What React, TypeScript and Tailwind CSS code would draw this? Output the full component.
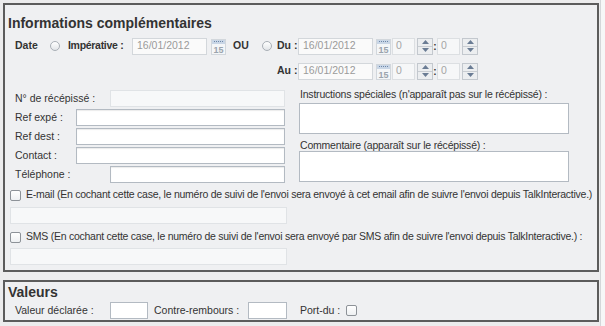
import React from "react"

const font = "font-['Liberation_Sans',Arial,sans-serif]"

function Radio() {
    return (
        <span className="size-[10px] shrink-0 rounded-full border border-[#a9afb6] bg-gradient-to-b from-[#ffffff] to-[#e2e5e8]" />
    )
}

function CheckBox() {
    return <span className="size-[11px] shrink-0 rounded-[2px] border border-[#8d9298] bg-gradient-to-b from-[#ffffff] to-[#eef0f2]" />
}

function CalendarIcon() {
    return (
        <svg width="15" height="17" viewBox="0 0 15 17" className="shrink-0">
            <rect x="0.5" y="1.5" width="14" height="15" fill="#f4f6f8" stroke="#d2d7dc" />
            <rect x="1" y="2" width="13" height="4" fill="#c9d6e6" />
            <rect x="3" y="3" width="1" height="1" fill="#6d87a8" />
            <rect x="5" y="3" width="1" height="1" fill="#6d87a8" />
            <rect x="7" y="3" width="1" height="1" fill="#6d87a8" />
            <rect x="9" y="3" width="1" height="1" fill="#6d87a8" />
            <rect x="11" y="3" width="1" height="1" fill="#6d87a8" />
            <text x="7.5" y="14.5" textAnchor="middle" fontSize="9" fontFamily="Liberation Sans, Arial" fill="#9aa3ad">15</text>
        </svg>
    )
}

function Spinner() {
    return (
        <div className="ml-[2px] flex h-[17px] w-[16px] shrink-0 flex-col border border-[#c3c8ce] bg-[#eceef0]">
            <div className="flex flex-1 items-center justify-center border-b border-[#c9cdd2]">
                <svg width="7" height="4" viewBox="0 0 7 4"><path d="M0 4 L3.5 0 L7 4 Z" fill="#6a7c94" /></svg>
            </div>
            <div className="flex flex-1 items-center justify-center">
                <svg width="7" height="4" viewBox="0 0 7 4"><path d="M0 0 L3.5 4 L7 0 Z" fill="#6a7c94" /></svg>
            </div>
        </div>
    )
}

function DateTime() {
    return (
        <div className="flex items-center">
            <div className="flex h-[17px] w-[75px] items-center border border-[#d3d7db] bg-[#fafafa] pl-[4px] font-normal text-[#9a9a9a]">16/01/2012</div>
            <div className="ml-[3px]"><CalendarIcon /></div>
            <div className="ml-[1px] flex h-[17px] w-[23px] items-center border border-[#dcdfe2] bg-[#f6f7f8] pl-[3px] font-normal text-[#a5a5a5]">0</div>
            <Spinner />
            <span className="w-[4px] text-center text-[10px] font-bold text-[#333]">:</span>
            <div className="flex h-[17px] w-[23px] items-center border border-[#dcdfe2] bg-[#f6f7f8] pl-[3px] font-normal text-[#a5a5a5]">0</div>
            <Spinner />
        </div>
    )
}

function Field({ label, labelW, inputW, disabled }: { label: string; labelW: number; inputW: number; disabled?: boolean }) {
    return (
        <div className="flex h-[17px] items-center">
            <span className="ml-[10px] shrink-0" style={{ width: labelW }}>{label}</span>
            <div
                className={disabled ? "h-[17px] border border-[#e0e3e6] bg-[#f7f8f9]" : "h-[17px] border border-[#b3bac2] bg-white shadow-[inset_0_1px_1px_rgba(0,0,0,0.08)]"}
                style={{ width: inputW }}
            />
        </div>
    )
}

export default function App() {
    return (
        <div className={`flex h-[326px] w-[605px] overflow-hidden bg-[#ececed] text-[10.5px] text-[#333] ${font}`}>
            <div className="flex w-[600px] flex-col pl-[3px] pt-[3px]">
                {/* Informations complémentaires */}
                <section className="flex h-[269px] w-[596px] flex-col border-2 border-[#5c5c5c] bg-[#eff0f2]">
                    <h2 className="mt-[10px] pl-[3px] text-[14px] font-bold leading-[17px] text-[#333]">Informations complémentaires</h2>

                    {/* Date row */}
                    <div className="mt-[5px] flex h-[18px] items-center font-bold">
                        <span className="ml-[10px] w-[35px]">Date</span>
                        <Radio />
                        <span className="ml-[8px] w-[64px] tracking-[-0.3px]">Impérative :</span>
                        <div className="flex h-[17px] w-[75px] items-center border border-[#d3d7db] bg-[#fafafa] pl-[4px] font-normal text-[#9a9a9a]">16/01/2012</div>
                        <div className="ml-[4px]"><CalendarIcon /></div>
                        <span className="ml-[7px] w-[29px]">OU</span>
                        <Radio />
                        <span className="ml-[5px] w-[21px]">Du :</span>
                        <DateTime />
                    </div>
                    <div className="mt-[7px] flex h-[18px] items-center font-bold">
                        <span className="ml-[272px] w-[21px]">Au :</span>
                        <DateTime />
                    </div>

                    {/* Two columns */}
                    <div className="mt-[8px] flex">
                        <div className="flex w-[294px] flex-col gap-[2px] pt-[2px]">
                            <Field label="N° de récépissé :" labelW={95} inputW={175} disabled />
                            <Field label="Ref expé :" labelW={61} inputW={209} />
                            <Field label="Ref dest :" labelW={61} inputW={209} />
                            <Field label="Contact :" labelW={61} inputW={209} />
                            <Field label="Téléphone :" labelW={95} inputW={175} />
                        </div>
                        <div className="flex flex-col">
                            <span className="ml-[1px] h-[12px] leading-[12px] tracking-[-0.2px]">Instructions spéciales (n'apparaît pas sur le récépissé) :</span>
                            <div className="mt-[3px] h-[31px] w-[270px] border border-[#b3bac2] bg-white" />
                            <span className="ml-[1px] mt-[5px] h-[12px] leading-[12px] tracking-[-0.2px]">Commentaire (apparaît sur le récépissé) :</span>
                            <div className="h-[31px] w-[270px] border border-[#b3bac2] bg-white" />
                        </div>
                    </div>

                    {/* E-mail */}
                    <div className="mt-[6px] flex h-[12px] items-center gap-[5px] pl-[5px]">
                        <CheckBox />
                        <span className="whitespace-nowrap tracking-[-0.25px]">E-mail (En cochant cette case, le numéro de suivi de l'envoi sera envoyé à cet email afin de suivre l'envoi depuis TalkInteractive.)</span>
                    </div>
                    <div className="ml-[5px] mt-[6px] h-[17px] w-[277px] border border-[#e0e3e6] bg-[#f7f8f9]" />

                    {/* SMS */}
                    <div className="mt-[7px] flex h-[12px] items-center gap-[5px] pl-[5px]">
                        <CheckBox />
                        <span className="whitespace-nowrap tracking-[-0.25px]">SMS (En cochant cette case, le numéro de suivi de l'envoi sera envoyé par SMS afin de suivre l'envoi depuis TalkInteractive.) :</span>
                    </div>
                    <div className="ml-[5px] mt-[5px] h-[17px] w-[277px] border border-[#e0e3e6] bg-[#f7f8f9]" />
                </section>

                {/* Valeurs */}
                <section className="mt-[8px] flex h-[42px] w-[596px] flex-col border-2 border-[#5c5c5c] bg-[#eff0f2]">
                    <h2 className="mt-[2px] pl-[3px] text-[14px] font-bold leading-[17px] text-[#333]">Valeurs</h2>
                    <div className="mt-[1px] flex h-[17px] items-center">
                        <span className="ml-[10px] w-[95px]">Valeur déclarée :</span>
                        <div className="h-[17px] w-[38px] border border-[#b3bac2] bg-white" />
                        <span className="ml-[6px] w-[94px]">Contre-rembours :</span>
                        <div className="h-[17px] w-[39px] border border-[#b3bac2] bg-white" />
                        <span className="ml-[13px] w-[46px]">Port-du :</span>
                        <CheckBox />
                    </div>
                </section>
            </div>

            {/* scrollbar strip */}
            <div className="w-[5px] border-l border-[#d4d6d9] bg-[#f6f6f7]" />
        </div>
    )
}
